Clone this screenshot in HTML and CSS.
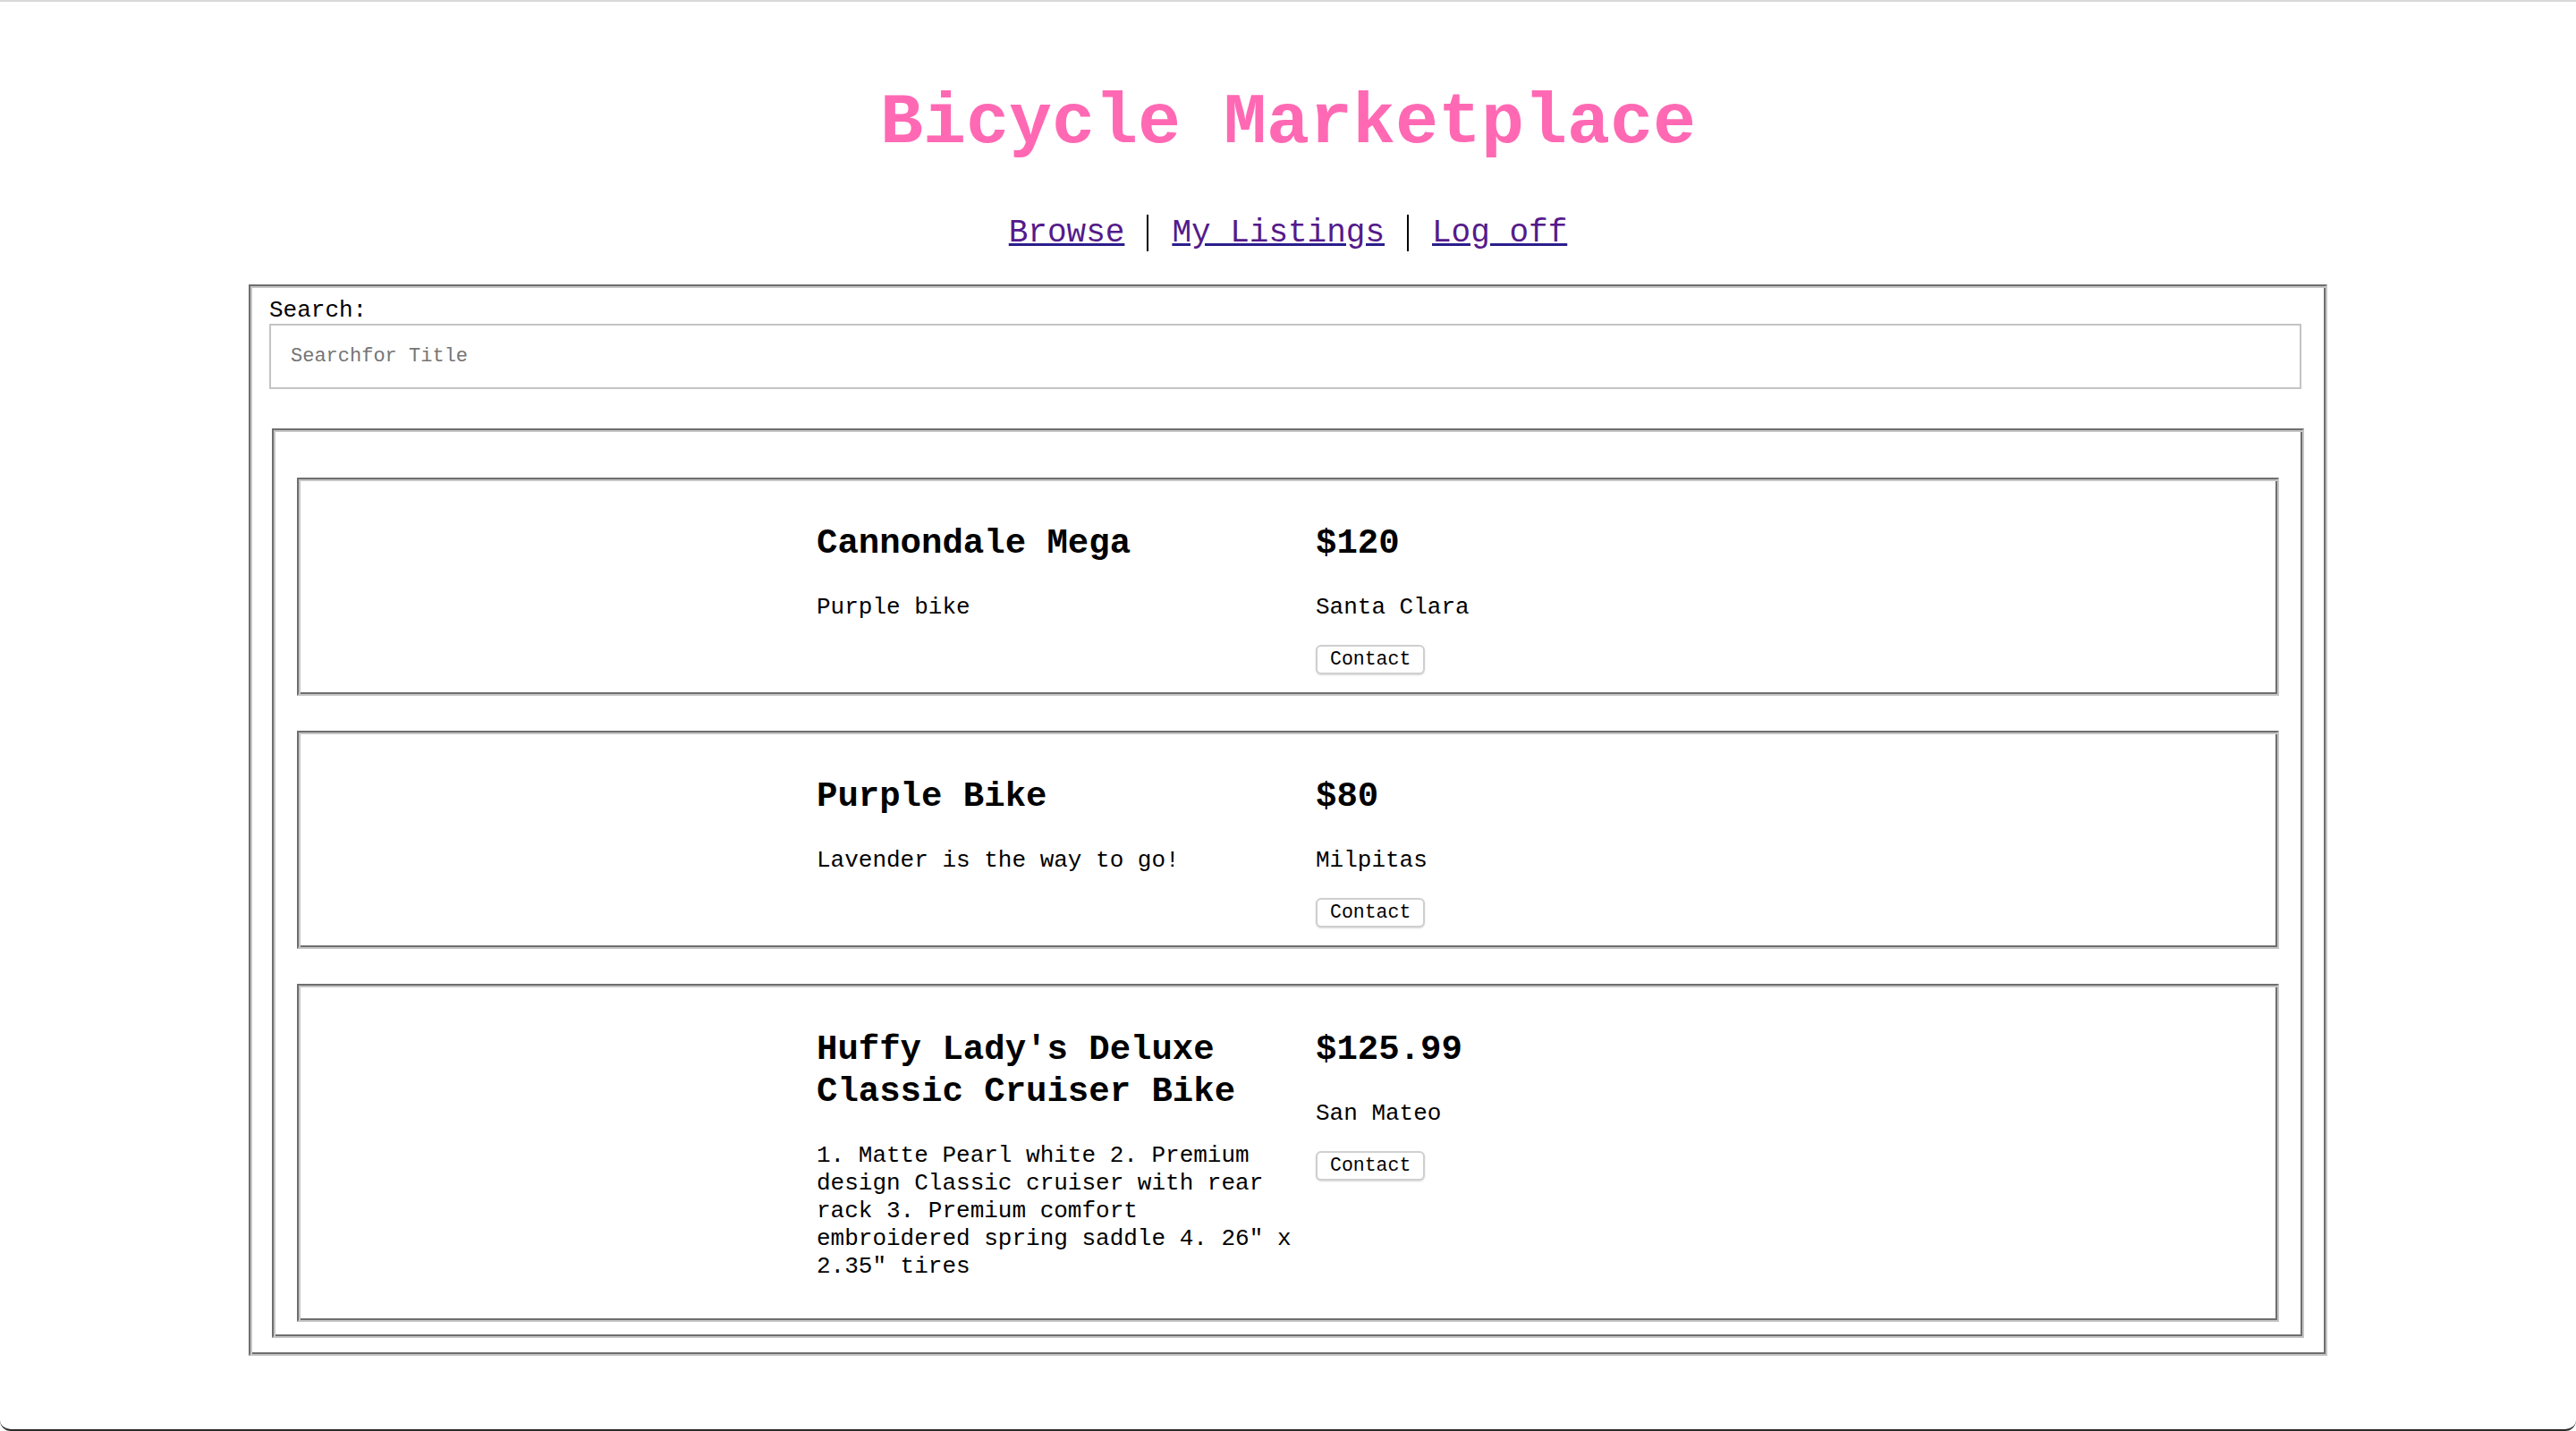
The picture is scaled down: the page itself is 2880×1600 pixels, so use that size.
FILE: index.html
```html
<!DOCTYPE html>
<html lang="en">
<head>
<meta charset="utf-8">
<title>Bicycle Marketplace</title>
<link rel="stylesheet" href="styles.css">
</head>
<body>
<div class="window">
  <h1 class="title">Bicycle Marketplace</h1>
  <nav class="nav"><a class="nav-link" href="#">Browse</a><span class="nav-sep"><a class="nav-link" href="#">My Listings</a></span><span class="nav-sep"><a class="nav-link" href="#">Log off</a></span></nav>
  <main class="panel">
    <label class="search-label" for="search">Search:</label>
    <input class="search-input" id="search" type="text" placeholder="Searchfor Title">
    <section class="listings">
      <div class="card">
        <div class="card-img"></div>
        <div class="card-info">
          <h3 class="card-title">Cannondale Mega</h3>
          <p class="card-text">Purple bike</p>
        </div>
        <div class="card-side">
          <h3 class="card-title">$120</h3>
          <p class="card-text">Santa Clara</p>
          <button class="contact" type="button">Contact</button>
        </div>
      </div>
      <div class="card">
        <div class="card-img"></div>
        <div class="card-info">
          <h3 class="card-title">Purple Bike</h3>
          <p class="card-text">Lavender is the way to go!</p>
        </div>
        <div class="card-side">
          <h3 class="card-title">$80</h3>
          <p class="card-text">Milpitas</p>
          <button class="contact" type="button">Contact</button>
        </div>
      </div>
      <div class="card">
        <div class="card-img"></div>
        <div class="card-info">
          <h3 class="card-title">Huffy Lady's Deluxe Classic Cruiser Bike</h3>
          <p class="card-text">1. Matte Pearl white 2. Premium design Classic cruiser with rear rack 3. Premium comfort embroidered spring saddle 4. 26" x 2.35" tires</p>
        </div>
        <div class="card-side">
          <h3 class="card-title">$125.99</h3>
          <p class="card-text">San Mateo</p>
          <button class="contact" type="button">Contact</button>
        </div>
      </div>
    </section>
  </main>
</div>
</body>
</html>
```

FILE: styles.css
```css
html, body {
  margin: 0;
  padding: 0;
  background: #ffffff;
}

body {
  font-family: "Liberation Mono", "Courier New", monospace;
  color: #000;
}

.window {
  height: 1600px;
  box-sizing: border-box;
  border-top: 2px solid #d8d8d8;
  border-bottom: 2px solid #2b2b2b;
  border-radius: 0 0 12px 12px;
  overflow: hidden;
}

.title {
  margin: 90px 0 0;
  font-size: 80px;
  font-weight: bold;
  line-height: normal;
  text-align: center;
  color: #ff69b4;
}

.nav {
  margin-top: 57px;
  font-size: 36px;
  line-height: normal;
  text-align: center;
}

.nav-link {
  color: #551a8b;
  text-decoration: underline;
  text-decoration-color: #2a1f8c;
}

.nav-sep {
  border-left: 2px solid #000;
  margin-left: 25px;
  padding-left: 26px;
}

.panel,
.listings,
.card {
  border: 2px solid;
  border-color: #6e6e6e #c6c6c6 #c6c6c6 #6e6e6e;
  box-shadow: inset 2px 2px 0 #c6c6c6, inset -2px -2px 0 #6e6e6e;
  background: #fff;
}

.panel {
  display: block;
  box-sizing: border-box;
  width: 2324px;
  margin: 37px auto 0;
  padding: 12px 24px 18px;
}

.search-label {
  display: block;
  margin-left: -3px;
  font-size: 26px;
  line-height: normal;
}

.search-input {
  display: block;
  box-sizing: border-box;
  width: 100%;
  height: 73px;
  margin: 0 0 0 -3px;
  padding: 0 22px;
  border: 2px solid #c4c4c4;
  border-radius: 0;
  font-family: "Liberation Mono", "Courier New", monospace;
  font-size: 22px;
  color: #000;
  background: #fff;
  outline: none;
}

.search-input::placeholder {
  color: #757575;
}

.listings {
  margin-top: 44px;
  padding: 53px 26px 16px;
  display: flex;
  flex-direction: column;
  gap: 39px;
}

.card {
  display: grid;
  grid-template-columns: 557px 538px 1fr;
  column-gap: 20px;
  align-items: start;
  padding: 10px 2px 17px;
}

.card-title {
  margin: 39px 0 32px;
  font-size: 39px;
  font-weight: bold;
  line-height: 1.2;
}

.card-text {
  margin: 0 0 26px;
  font-size: 26px;
  line-height: 1.2;
}

.contact {
  display: block;
  box-sizing: border-box;
  height: 33px;
  margin: 0 0 5px;
  padding: 0 14px;
  font-family: "Liberation Mono", "Courier New", monospace;
  font-size: 21.5px;
  line-height: 1;
  color: #000;
  background: #fff;
  border: 2px solid #cfcfcf;
  border-radius: 6px;
  box-shadow: 0 1px 2px rgba(0, 0, 0, 0.15);
}
```
